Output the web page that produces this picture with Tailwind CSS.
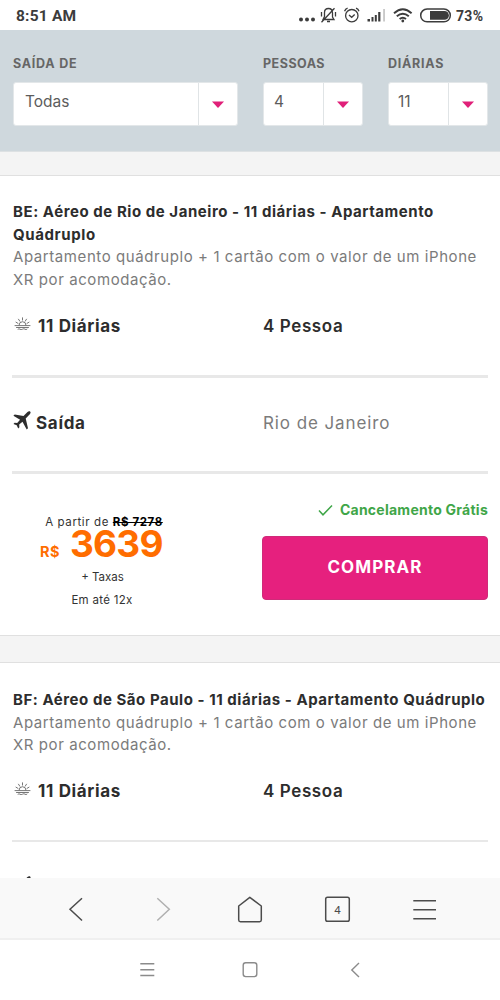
<!DOCTYPE html>
<html lang="pt-BR">
<head>
<meta charset="utf-8">
<title>Pacotes</title>
<script src="https://cdn.jsdelivr.net/npm/@tailwindcss/browser@4"></script>
</head>
<body class="bg-white">
<svg class="hidden">
  <symbol id="sun" viewBox="0 0 16 13">
    <g fill="none" stroke="#707070" stroke-width=".95" stroke-linecap="round">
      <path d="M4.500 8.200a3.500 3.500 0 0 1 7 0M8 .8v2.300M4 2.200l1.300 2M12 2.200l-1.300 2M1.500 5.200l2 1.200M14.500 5.200l-2 1.200M.5 8.600h15M2 10.500h12M3.500 12.200q1-.9 2 0t2.500 0 2.500 0 2 0"/>
    </g>
  </symbol>
  <symbol id="plane" viewBox="0 0 18 19">
    <path fill="#2d2d2d" d="M17.300.8c.6.7.2 1.700-.5 2.400L12.700 7.400 15 17.200l-1.300 1.300-4.200-7.700-3.300 2.800.2 2.700-1.200 1.100-1.500-3.100-3.200-1.300 1.100-1.200 2.600.1 2.900-3.200L.4 4.700l1.300-1.300 8.800 1.500 4-3.900c.8-.7 2.100-1 2.800-.2z"/>
  </symbol>
</svg>
<div class="w-[500px] h-[1000px] overflow-hidden flex flex-col bg-white text-[#2d2d2d] font-['Inter','Liberation_Sans',sans-serif]">

  <!-- status bar -->
  <header class="h-[30px] shrink-0 flex items-center justify-between pl-4 pr-4 text-[#3c3c3c]">
    <span class="font-['Roboto',sans-serif] font-bold text-[15.500px] leading-[30px] pt-[2px] tracking-[0.2px]">8:51 AM</span>
    <div class="flex items-center">
      <svg class="w-[158px] h-[30px]" viewBox="298 0 158 30" fill="none" stroke="#3c3c3c" stroke-width="1.3">
        <g fill="#3c3c3c" stroke="none"><circle cx="301" cy="19.500" r="2"/><circle cx="307" cy="19.500" r="2"/><circle cx="313" cy="19.500" r="2"/></g>
        <path d="M323 19.500h11l-1.500-2.500v-4c0-3-1.600-4.500-4-4.500s-4 1.500-4 4v4zM327 21.500h3M334.500 8.200l-13 14M321.500 12v4.500M335.500 12v4.500"/>
        <circle cx="351.800" cy="15.700" r="6.200"/><path d="M344.600 11.200q.7-2.300 3-3M359 11.200q-.7-2.300-3-3M349 15l2.700 2.300 3-2.700"/>
        <g fill="#3c3c3c" stroke="none"><path d="M367.500 19h2.500v2.500h-2.500zM371.500 17h2v4.500h-2zM374.800 15h2v6.500h-2zM378.200 12h2.200v9.500h-2.200z"/><path fill="#bbb" d="M383.300 9h1.500v12.500h-1.500z"/></g>
        <path stroke-width="1.900" d="M394 13.300q8.800-8 17.600 0M396.800 16.300q6-5.200 12 0M399.600 19q3.200-2.600 6.400 0"/><circle cx="402.800" cy="21" r="1.400" fill="#3c3c3c" stroke="none"/>
        <rect x="420.700" y="9" width="29.600" height="12.800" rx="6.400" stroke-width="1.500"/><path fill="#3c3c3c" stroke="none" d="M430 11h14.500a4.400 4.400 0 0 1 0 8.800H430z"/>
      </svg>
      <span class="w-[28px] whitespace-nowrap font-['Roboto',sans-serif] font-bold text-[14px] leading-[30px] pt-[2px] tracking-[0.3px]">73%</span>
    </div>
  </header>

  <!-- filters -->
  <section class="h-[122px] shrink-0 bg-[#cfd8dd] border-b border-[#dde1e3] pl-[13px] pr-[12px] pt-[25px] flex gap-[25px] text-[#666]">
    <div class="w-[225px]">
      <div class="h-[17px] leading-[17px] text-[12.500px] font-bold tracking-[0.75px] whitespace-nowrap">SAÍDA DE</div>
      <div class="mt-[10px] h-[44px] bg-white border border-[#e3e7e9] rounded-[3px] flex">
        <div class="grow pl-[11px] leading-[38px] text-[15.500px] text-[#5c5c5c]">Todas</div>
        <div class="w-[39px] border-l border-[#e0e4e6] flex items-center justify-center"><svg class="w-[12px] h-[7px]" viewBox="0 0 12 7"><path fill="#e02079" d="M0 .5h12L6 7z"/></svg></div>
      </div>
    </div>
    <div class="w-[100px]">
      <div class="h-[17px] leading-[17px] text-[12.500px] font-bold tracking-[0.5px] whitespace-nowrap">PESSOAS</div>
      <div class="mt-[10px] h-[44px] bg-white border border-[#e3e7e9] rounded-[3px] flex">
        <div class="grow pl-[10px] leading-[38px] text-[15.500px] text-[#5c5c5c]">4</div>
        <div class="w-[39px] border-l border-[#e0e4e6] flex items-center justify-center"><svg class="w-[12px] h-[7px]" viewBox="0 0 12 7"><path fill="#e02079" d="M0 .5h12L6 7z"/></svg></div>
      </div>
    </div>
    <div class="w-[100px]">
      <div class="h-[17px] leading-[17px] text-[12.500px] font-bold tracking-[0.75px] whitespace-nowrap">DIÁRIAS</div>
      <div class="mt-[10px] h-[44px] bg-white border border-[#e3e7e9] rounded-[3px] flex">
        <div class="grow pl-[9px] leading-[38px] text-[15.500px] text-[#5c5c5c]">11</div>
        <div class="w-[39px] border-l border-[#e0e4e6] flex items-center justify-center"><svg class="w-[12px] h-[7px]" viewBox="0 0 12 7"><path fill="#e02079" d="M0 .5h12L6 7z"/></svg></div>
      </div>
    </div>
  </section>

  <main class="grow overflow-hidden bg-[#f4f4f4] pt-[23px]">
    <article class="h-[461px] bg-white border-y border-[#e0e0e0] px-[12px] pt-[25px]">
      <div class="pl-px whitespace-nowrap text-[15px] leading-[22.700px]">
        <h2 class="font-bold"><span class="tracking-[0.55px]">BE: Aéreo de Rio de Janeiro - 11 diárias - Apartamento</span><br><span class="tracking-[0.6px]">Quádruplo</span></h2>
        <p class="text-[#7b7b7b]"><span class="tracking-[0.58px]">Apartamento quádruplo + 1 cartão com o valor de um iPhone</span><br><span class="tracking-[0.58px]">XR por acomodação.</span></p>
      </div>
      <div class="mt-[21px] h-[26px] grid grid-cols-[251px_1fr] leading-[26px] text-[17px]">
        <div class="flex pl-[2px]"><svg class="w-[17px] h-[13px] mt-[4px] mr-[7px]"><use href="#sun"/></svg><span class="font-bold tracking-[0.65px]">11 Diárias</span></div>
        <span class="font-semibold tracking-[0.6px]">4 Pessoa</span>
      </div>
      <div class="mt-[36px] h-[3px] bg-[#e8e8e8]"></div>
      <div class="mt-[32px] h-[26px] grid grid-cols-[251px_1fr] leading-[26px] text-[17px]">
        <div class="flex pl-[1px]"><svg class="w-[18px] h-[19px] mt-[1px] mr-[5px]"><use href="#plane"/></svg><span class="font-bold tracking-[0.7px]">Saída</span></div>
        <span class="text-[#7b7b7b] tracking-[0.9px]">Rio de Janeiro</span>
      </div>
      <div class="mt-[35px] h-[3px] bg-[#e8e8e8]"></div>
      <div class="grid grid-cols-[250px_1fr]">
        <div class="w-[180px] pt-[40px] text-center text-[11.500px] text-[#333]">
          <div class="h-[16px] leading-[16px] pl-[4px] whitespace-nowrap tracking-[0.6px]">A partir de <span class="font-bold text-black line-through">R$ 7278</span></div>
          <div class="h-[29px] flex items-baseline justify-start pl-[28px] text-[#ff6d00] font-bold"><span class="text-[14.500px] leading-[16px] tracking-[0.5px]">R$</span><span class="ml-[10px] text-[37px] leading-[27px] tracking-[-0.8px]">3639</span></div>
          <div class="h-[23px] leading-[23px] mt-[7px] pl-[1px]">+ Taxas</div>
          <div class="h-[23px] leading-[23px] tracking-[0.3px]">Em até 12x</div>
        </div>
        <div>
          <div class="mt-[26px] h-[20px] flex justify-end items-center text-[#3fa648] text-[14px] font-bold leading-[20px] whitespace-nowrap tracking-[0.25px]"><svg class="w-[15px] h-[12px] mr-[7px]" viewBox="0 0 15 12" fill="none" stroke="#3fa648" stroke-width="1.500"><path d="M1 6.500l4 4.300L14 1.500"/></svg>Cancelamento Grátis</div>
          <button class="block mt-[16px] w-full h-[64px] rounded-[4px] bg-[#e6207e] border border-[#cf2b79] text-white font-bold text-[17px] leading-[61px] tracking-[1.1px]">COMPRAR</button>
        </div>
      </div>
    </article>

    <article class="mt-[26px] h-[340px] bg-white border-t border-[#e0e0e0] px-[12px] pt-[26px]">
      <div class="pl-px whitespace-nowrap text-[15px] leading-[22.700px]">
        <h2 class="font-bold"><span class="tracking-[0.54px]">BF: Aéreo de São Paulo - 11 diárias - Apartamento Quádruplo</span></h2>
        <p class="text-[#7b7b7b]"><span class="tracking-[0.58px]">Apartamento quádruplo + 1 cartão com o valor de um iPhone</span><br><span class="tracking-[0.58px]">XR por acomodação.</span></p>
      </div>
      <div class="mt-[21px] h-[26px] grid grid-cols-[251px_1fr] leading-[26px] text-[17px]">
        <div class="flex pl-[2px]"><svg class="w-[17px] h-[13px] mt-[4px] mr-[7px]"><use href="#sun"/></svg><span class="font-bold tracking-[0.65px]">11 Diárias</span></div>
        <span class="font-semibold tracking-[0.6px]">4 Pessoa</span>
      </div>
      <div class="mt-[36px] h-[2px] bg-[#e8e8e8]"></div>
      <div class="mt-[34px] pl-px"><svg class="w-[18px] h-[19px]"><use href="#plane"/></svg></div>
    </article>
  </main>

  <!-- browser toolbar -->
  <nav class="h-[62px] shrink-0 bg-[#f9f9f9] border-b-2 border-[#f0f0f0]">
    <svg class="w-[500px] h-[60px]" viewBox="0 878 500 60" fill="none" stroke="#4c4c4c" stroke-width="1.500">
      <path d="M82 898.300L70 909.300 82 920.500"/>
      <path stroke="#b0b0b0" d="M157.300 898.300l12 11-12 11.200"/>
      <path stroke-linejoin="round" d="M238.700 906l11.100-8.700 11.500 8.700v14q0 1.700-1.700 1.700h-19.200q-1.700 0-1.700-1.700z"/>
      <rect x="325.700" y="897.300" width="23.600" height="24" rx="1.800"/>
      <path d="M413.300 900.800h22.700M413.300 909.700h22.700M413.300 918.700h22.700"/>
      <text x="337.600" y="913.800" text-anchor="middle" fill="#4c4c4c" stroke="none" font-family="Roboto" font-size="11.500">4</text>
    </svg>
  </nav>

  <!-- system navigation -->
  <nav class="h-[60px] shrink-0 bg-white">
    <svg class="w-[500px] h-[60px]" viewBox="0 940 500 60" fill="none" stroke="#8b8b8b" stroke-width="1.400">
      <path d="M140.300 963.700h14M140.300 969.800h14M140.300 975.500h14"/>
      <rect x="243.200" y="962.800" width="13.600" height="13.800" rx="2.500"/>
      <path d="M359 963l-7.200 6.900 7.200 7"/>
    </svg>
  </nav>
</div>
</body>
</html>
